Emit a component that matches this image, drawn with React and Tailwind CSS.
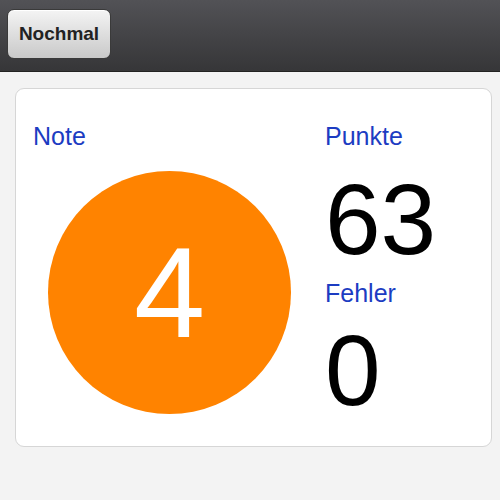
export default function App() {
  const font = { fontFamily: '"Liberation Sans", Arial, sans-serif' };
  return (
    <div className="w-[500px] h-[500px] bg-[#f3f3f3] overflow-hidden" style={font}>
      <div className="h-[72px] bg-gradient-to-b from-[#525256] to-[#363638] border-b border-[#222] flex items-start">
        <button className="mt-[9px] ml-[7px] w-[104px] h-[50px] rounded-[7px] border border-[#3a3a3a] bg-gradient-to-b from-[#f4f4f4] to-[#c9c9c9] shadow-[inset_0_1px_0_#fff] text-[19px] font-bold text-[#222] flex items-center justify-center">
          Nochmal
        </button>
      </div>
      <div className="mt-[16px] ml-[15px] w-[477px] h-[359px] bg-white border border-[#d6d6d6] rounded-[9px] flex pt-[35px]">
        <div className="w-[292px] pl-[17px] flex flex-col">
          <div className="text-[25px] leading-[25px] text-[#1c3cc2]">Note</div>
          <div className="mt-[22px] ml-[15px] w-[243px] h-[243px] rounded-full bg-[#ff8300] flex items-center justify-center">
            <span className="text-[128px] leading-none text-white">4</span>
          </div>
        </div>
        <div className="pl-[17px] flex flex-col">
          <div className="text-[25px] leading-[25px] text-[#1c3cc2]">Punkte</div>
          <div className="mt-[20px] text-[100px] leading-[100px] text-black">63</div>
          <div className="mt-[12px] text-[25px] leading-[25px] text-[#1c3cc2]">Fehler</div>
          <div className="mt-[14px] text-[100px] leading-[100px] text-black">0</div>
        </div>
      </div>
    </div>
  );
}
